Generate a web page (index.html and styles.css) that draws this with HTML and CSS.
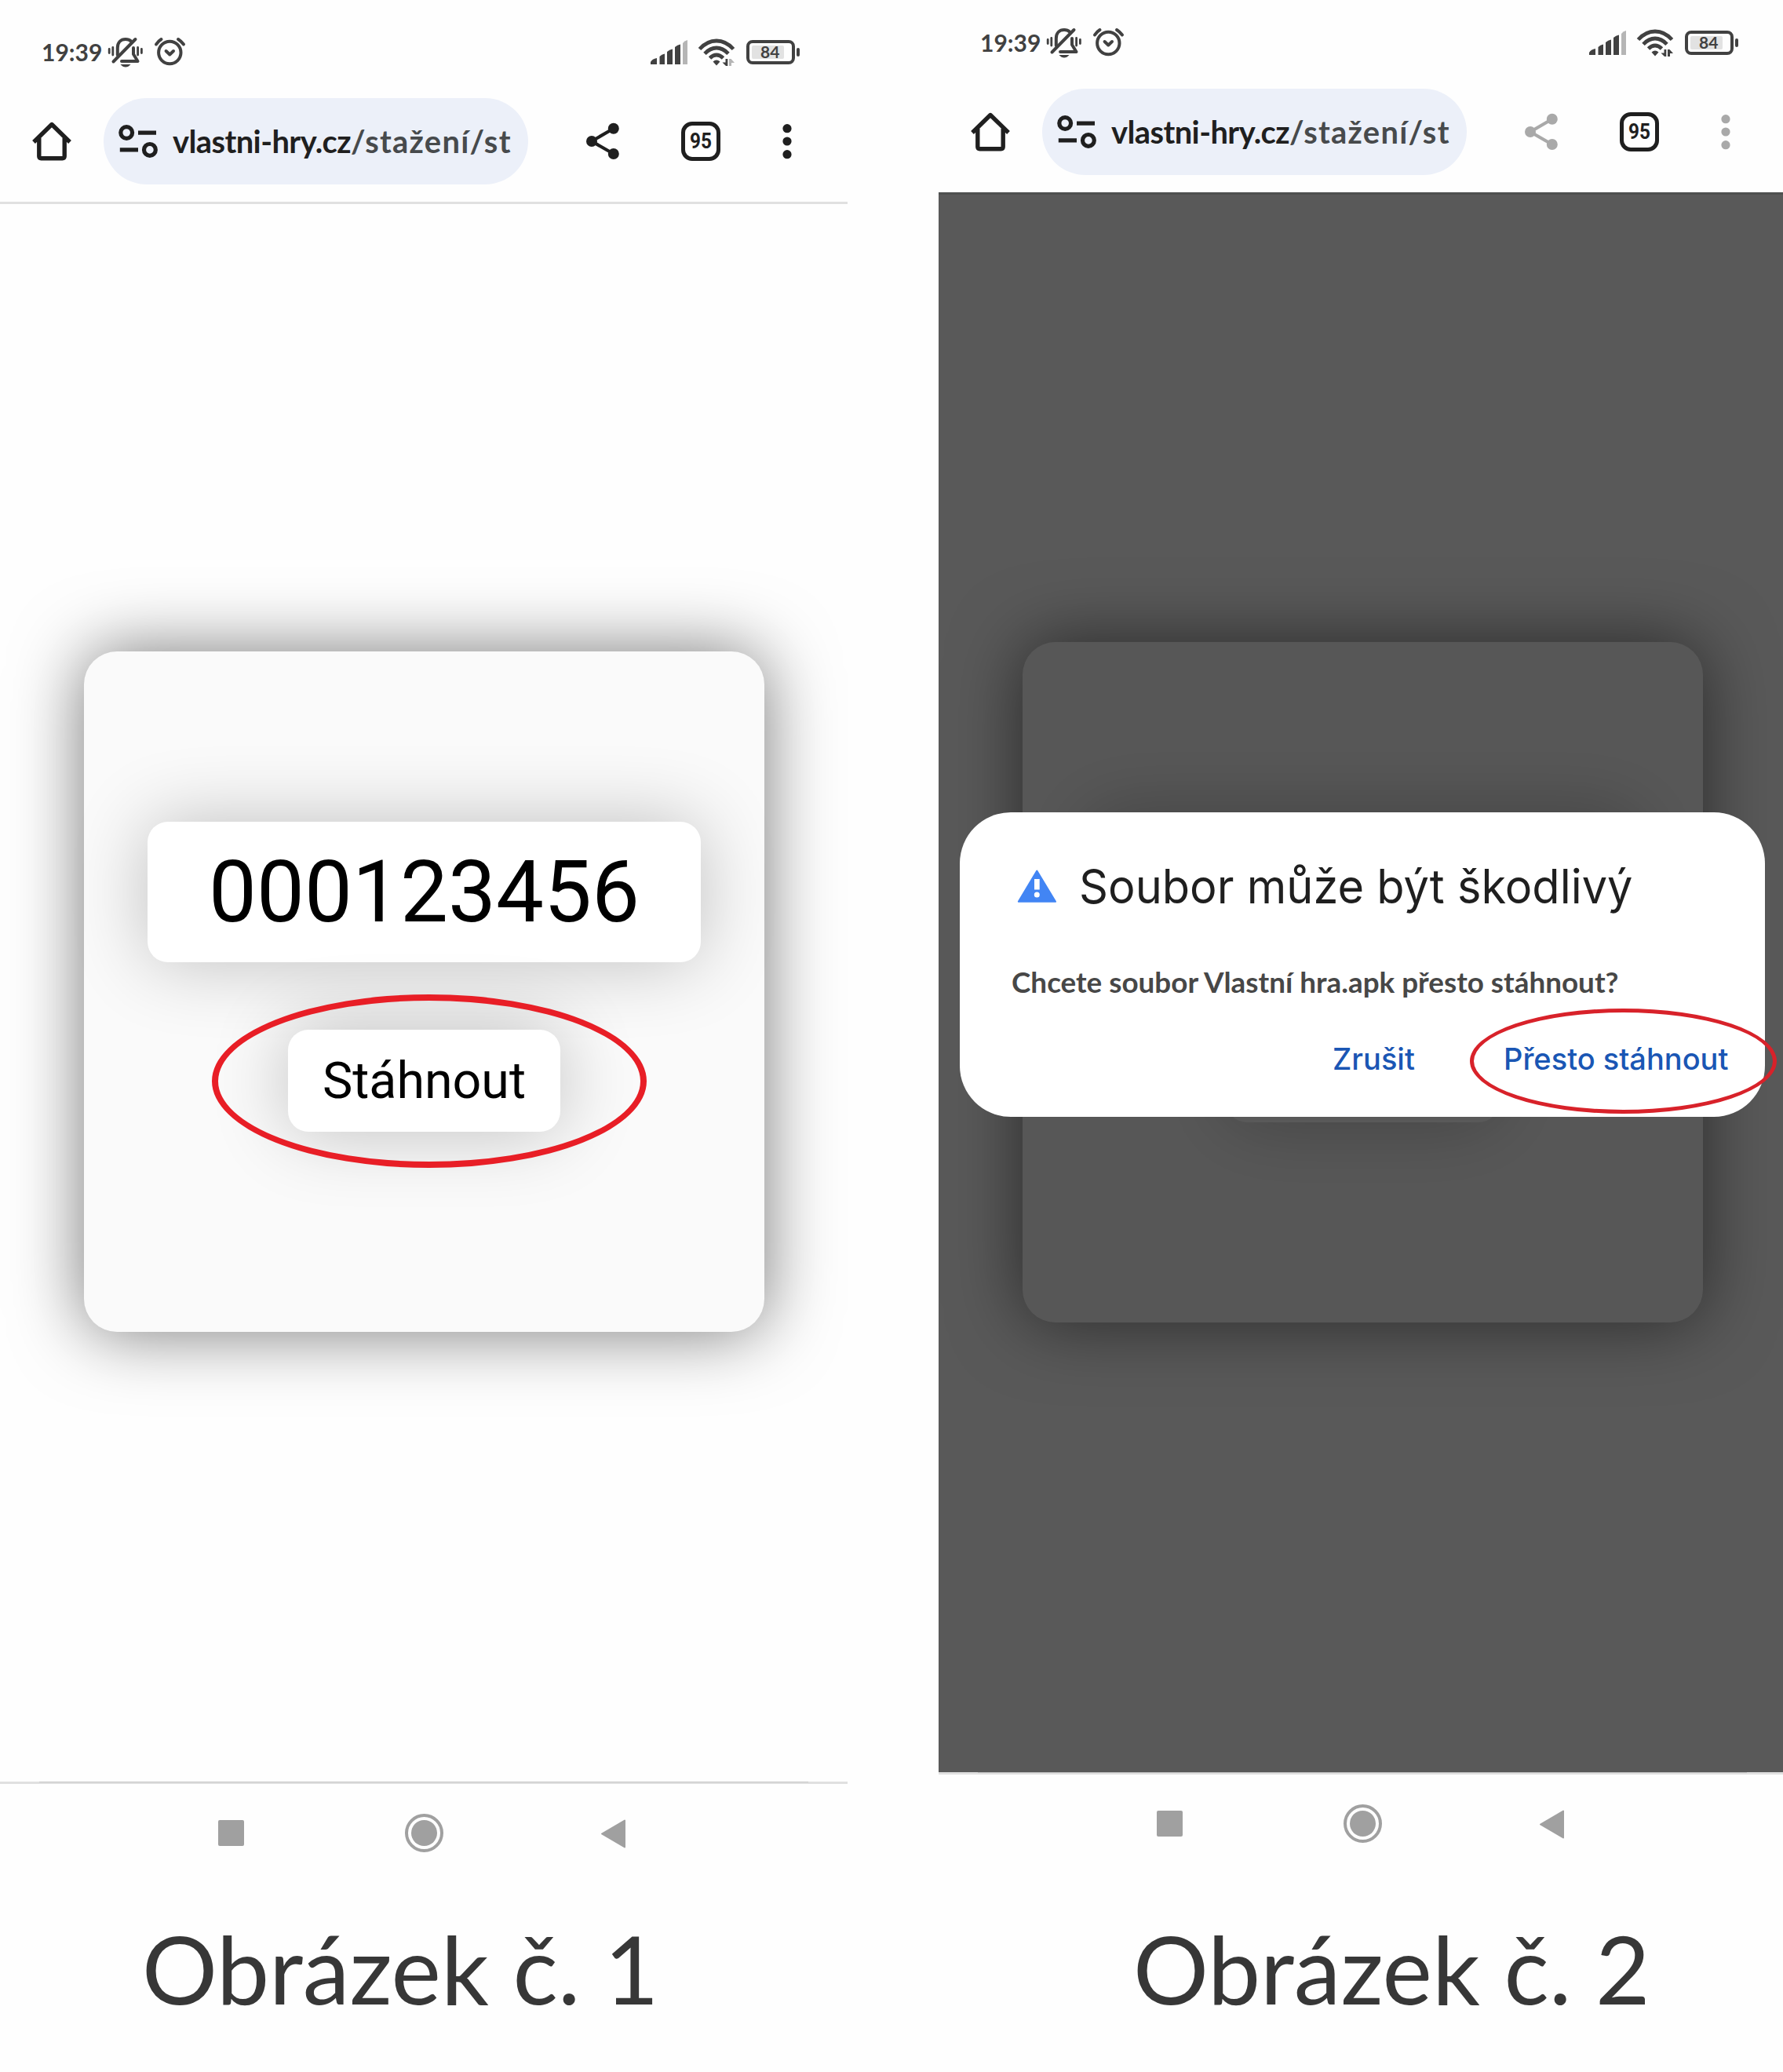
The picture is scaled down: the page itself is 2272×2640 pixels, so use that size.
FILE: index.html
```html
<!DOCTYPE html>
<html lang="cs">
<head>
<meta charset="utf-8">
<title>Stažení aplikace</title>
<link rel="stylesheet" href="styles.css">
</head>
<body>
<svg class="sprite" aria-hidden="true">
  <symbol id="i-mute" viewBox="137 46 47 40">
    <g fill="none" stroke="currentColor" stroke-linecap="round" stroke-linejoin="round">
      <path stroke-width="4" d="M149.8 70V61C149.8 54 154 50 160 50C163 50 165.500 51 167 52.500M170 61V69L175.500 78H155"/>
      <path stroke-width="4" d="M144.500 78.500L172.500 50"/>
      <path stroke-width="2.800" d="M139.200 62.500V67.500M143.800 60.500V70M175.600 60.500V70M180.400 62.500V67.500"/>
    </g>
    <path fill="currentColor" d="M153.500 82H166.500Q163.500 85.500 160 85.500T153.500 82Z"/>
  </symbol>
  <symbol id="i-alarm" viewBox="196 46 42 40">
    <g fill="none" stroke="currentColor" stroke-width="4" stroke-linecap="round" stroke-linejoin="round">
      <circle cx="216.300" cy="67" r="14.200"/>
      <path d="M211.600 65L216.300 69.500L221 65M199 56.500Q201.500 52.500 205.500 50M227 50Q231 52.500 234 56.500"/>
    </g>
  </symbol>
  <symbol id="i-signal" viewBox="828 46 50 40">
    <path fill="currentColor" d="M829 82V79Q831 75 837 74V82ZM840.500 82V72Q843 69 847 68.500V82ZM850 82V66Q853 63 857 62.500V82ZM860 82V60Q863 57 867 56.500V82Z"/>
    <path fill="#b5b5b5" d="M870 82V55Q872 52 876 51V82Z"/>
  </symbol>
  <symbol id="i-wifi" viewBox="888 46 50 40">
    <g fill="none" stroke="currentColor" stroke-width="4.800">
      <path d="M891.500 62.500Q901 52 913 52T934.500 62.500M898 68.300Q905 61 913 61T928 68.300M904.500 74Q908.500 70 913 70T921.500 74"/>
    </g>
    <path fill="currentColor" d="M908.500 78.500Q913 74.500 917.500 78.500L913 83.500ZM924.500 75H927.300V84H925L920.500 79.500H924.500Z"/>
    <path class="up" d="M929 75H931.500L936 80H932V84H929Z"/>
  </symbol>
  <symbol id="i-home" viewBox="41 155 50 50">
    <path fill="none" stroke="currentColor" stroke-width="5.400" stroke-linejoin="round" d="M43 181L66 158.500L89 181M49.800 176V199Q49.800 201.700 52.500 201.700H79.500Q82.200 201.700 82.200 199V176"/>
  </symbol>
  <symbol id="i-tune" viewBox="150 157 52 46">
    <g fill="none" stroke="currentColor" stroke-width="5.200">
      <circle cx="161.200" cy="169" r="7.400"/><circle cx="190.900" cy="190.900" r="7.400"/>
      <path d="M176 169.200H199M152.800 190.900H176"/>
    </g>
  </symbol>
  <symbol id="i-share" viewBox="746 157 44 48">
    <path fill="none" stroke="currentColor" stroke-width="4.200" d="M781.800 164.700L754 181L781.800 197"/>
    <g fill="currentColor"><circle cx="754" cy="181" r="7"/><circle cx="781.800" cy="164.700" r="7"/><circle cx="781.800" cy="197" r="7"/></g>
  </symbol>
  <symbol id="i-more" viewBox="997 157 12 46">
    <g fill="currentColor"><circle cx="1003" cy="163.700" r="5.600"/><circle cx="1003" cy="180" r="5.600"/><circle cx="1003" cy="196.700" r="5.600"/></g>
  </symbol>
  <symbol id="i-back" viewBox="764 2315 34 40">
    <path fill="currentColor" stroke="currentColor" stroke-width="2" stroke-linejoin="round" d="M767 2335.500L796 2318.500V2352.500Z"/>
  </symbol>
  <symbol id="i-warn" viewBox="1297 1108 51 44">
    <path fill="#4285f4" stroke="#4285f4" stroke-width="2" stroke-linejoin="round" d="M1322.300 1110.500L1346 1149.800H1298.800Z"/>
    <path fill="#fff" d="M1319 1121H1325.700V1134.500H1319Z"/><circle fill="#fff" cx="1322.300" cy="1141" r="3.500"/>
  </symbol>
</svg>

<main class="sheet">
  <figure class="step">
    <div class="phone">
      <div class="status">
        <span class="fit time">19:39</span>
        <svg class="s-mute"><use href="#i-mute"/></svg>
        <svg class="s-alarm"><use href="#i-alarm"/></svg>
        <svg class="s-signal"><use href="#i-signal"/></svg>
        <svg class="s-wifi"><use href="#i-wifi"/></svg>
        <span class="battery"><span class="charge"></span><span class="fit level">84</span></span>
      </div>
      <div class="toolbar">
        <svg class="t-home"><use href="#i-home"/></svg>
        <div class="omnibox">
          <svg class="t-tune"><use href="#i-tune"/></svg>
          <span class="fit url">vlastni-hry.cz<span class="path">/stažení/st</span></span>
        </div>
        <svg class="t-share"><use href="#i-share"/></svg>
        <span class="tabs"><span class="fit count">95</span></span>
        <svg class="t-more"><use href="#i-more"/></svg>
      </div>
      <div class="page">
        <div class="card">
          <div class="code"><span class="digits">000123456</span></div>
          <div class="download"><span class="label">Stáhnout</span></div>
        </div>
      </div>
      <div class="nav">
        <span class="n-recent"></span><span class="n-home"></span><svg class="n-back"><use href="#i-back"/></svg>
      </div>
    </div>
    <figcaption class="caption"><span class="fit cap">Obrázek č. 1</span></figcaption>
    <div class="ring ring-download"></div>
  </figure>

  <figure class="step step-two">
    <div class="phone">
      <div class="status">
        <span class="fit time">19:39</span>
        <svg class="s-mute"><use href="#i-mute"/></svg>
        <svg class="s-alarm"><use href="#i-alarm"/></svg>
        <svg class="s-signal"><use href="#i-signal"/></svg>
        <svg class="s-wifi"><use href="#i-wifi"/></svg>
        <span class="battery"><span class="charge"></span><span class="fit level">84</span></span>
      </div>
      <div class="toolbar">
        <svg class="t-home"><use href="#i-home"/></svg>
        <div class="omnibox">
          <svg class="t-tune"><use href="#i-tune"/></svg>
          <span class="fit url">vlastni-hry.cz<span class="path">/stažení/st</span></span>
        </div>
        <svg class="t-share"><use href="#i-share"/></svg>
        <span class="tabs"><span class="fit count">95</span></span>
        <svg class="t-more"><use href="#i-more"/></svg>
      </div>
      <div class="page">
        <div class="card">
          <div class="code"></div>
          <div class="download"></div>
        </div>
        <div class="scrim">
          <div class="dialog">
            <div class="heading"><svg class="d-warn"><use href="#i-warn"/></svg><span class="fit title">Soubor může být škodlivý</span></div>
            <div class="message"><span class="fit msg">Chcete soubor Vlastní hra.apk přesto stáhnout?</span></div>
            <div class="actions"><span class="fit cancel">Zrušit</span><span class="fit confirm">Přesto stáhnout</span></div>
          </div>
        </div>
      </div>
      <div class="nav">
        <span class="n-recent"></span><span class="n-home"></span><svg class="n-back"><use href="#i-back"/></svg>
      </div>
    </div>
    <figcaption class="caption"><span class="fit cap">Obrázek č. 2</span></figcaption>
    <div class="ring ring-confirm"></div>
  </figure>
</main>
</body>
</html>
```
FILE: styles.css
```css
* { box-sizing: border-box; }
body { margin: 0; width: 2272px; height: 2640px; overflow: hidden; background: #fefefe; font-family: "Lato", "Liberation Sans", sans-serif; }
.sprite { display: none; }
svg { display: block; flex: none; }
.sheet { display: flex; gap: 116px; width: 2272px; height: 2640px; overflow: hidden; }
.step { --up: #b5b5b5; position: relative; flex: none; width: 1080px; margin: 0; padding-top: 12px; }
.step-two { --up: #414141; padding-top: 0; width: 1076px; overflow: hidden; }
.phone { width: 1080px; height: 2412px; display: flex; flex-direction: column; }
.fit { display: block; flex: none; white-space: nowrap; transform-origin: 0 50%; }

.status { display: flex; align-items: center; height: 88px; padding: 20px 67px 0 53px; color: #414141; }
.time { width: 84px; font-size: 30px; font-weight: 700; }
.s-mute { width: 47px; height: 40px; }
.s-alarm { width: 42px; height: 40px; margin-left: 12px; }
.s-signal { width: 50px; height: 40px; margin-left: auto; }
.s-wifi { width: 50px; height: 40px; margin-left: 10px; }
.up { fill: var(--up); }
.battery { position: relative; display: flex; align-items: center; width: 62px; height: 31px; margin-left: 13px; padding-left: 14px; border: 4px solid currentColor; border-radius: 8px; }
.battery::after { content: ""; position: absolute; left: 60px; top: 6px; width: 4px; height: 11px; border-radius: 2px; background: currentColor; }
.charge { position: absolute; left: 3px; top: 3px; width: 41px; height: 17px; border-radius: 2px; background: #e2e2e2; }
.level { position: relative; font-size: 21px; line-height: 22px; font-weight: 700; }

.toolbar { display: flex; align-items: center; height: 160px; padding: 3px 71px 0 41px; border-bottom: 3px solid #e0e0e0; color: #1f1f1f; }
.t-home { width: 50px; height: 50px; }
.omnibox { display: flex; align-items: center; width: 541px; height: 110px; margin-left: 41px; padding-left: 18px; border-radius: 55px; background: #ecf0f9; }
.t-tune { width: 52px; height: 46px; }
.url { margin-left: 18px; font-size: 41px; font-weight: 700; line-height: 56px; letter-spacing: -.6px; transform: scaleX(.973); }
.path { color: #474a4c; letter-spacing: 1.300px; }
.t-share { width: 44px; height: 48px; margin-left: 73px; }
.tabs { display: flex; align-items: center; width: 50px; height: 50px; margin-left: 78px; padding-left: 6px; border: 5px solid currentColor; border-radius: 14px; }
.count { font: 700 28px/30px Roboto, sans-serif; transform: scaleX(.87); }
.t-more { width: 12px; height: 46px; margin-left: auto; }

.page { position: relative; height: 2010px; padding: 570px 0 0 107px; overflow: hidden; }
.card { display: flex; flex-direction: column; align-items: center; width: 867px; height: 867px; padding-top: 217px; border-radius: 42px; background: #fafafa; box-shadow: 0 0 90px rgba(0, 0, 0, .53); }
.code { display: flex; align-items: center; justify-content: center; width: 705px; height: 179px; border-radius: 26px; background: #fff; box-shadow: 0 0 96px rgba(0, 0, 0, .24); }
.digits { font: 400 108.500px/130px Roboto, sans-serif; color: #000; }
.download { display: flex; align-items: center; justify-content: center; width: 347px; height: 130px; margin-top: 86px; border-radius: 26px; background: #fff; box-shadow: 0 0 96px rgba(0, 0, 0, .24); }
.label { font: 400 64.500px/76px Roboto, sans-serif; color: #000; }

.nav { position: relative; display: flex; align-items: center; height: 128px; padding: 0 282px 0 278px; border-top: 3px solid #e0e0e0; color: #a0a0a0; }
.nav::before { content: ""; position: absolute; left: 50px; right: 50px; top: -3px; height: 1px; background: #c4c4c4; }
.n-recent { width: 33px; height: 33px; border-radius: 2px; background: currentColor; }
.n-home { display: flex; width: 49px; height: 49px; margin-left: 205px; padding: 4px; border: 4px solid currentColor; border-radius: 50%; background: currentColor content-box; }
.n-back { width: 34px; height: 40px; margin-left: auto; }

.caption { display: block; }
.cap { font-size: 120px; line-height: 144px; color: #373737; }
.step .caption { padding: 11.500px 0 0 181px; }
.step-two .caption { padding: 23.500px 0 0 248px; }

.ring { position: absolute; border-style: solid; border-radius: 50%; }
.ring-download { left: 270px; top: 1267px; width: 554px; height: 221px; border-width: 8px; border-color: #e81e26; }
.ring-confirm { left: 677px; top: 1285px; width: 391px; height: 134px; border-width: 5px; border-color: #d8222a; }

.step-two .toolbar { border-color: #4e504f; }
.step-two .t-share, .step-two .t-more { color: #a9a9a9; }
.scrim { position: absolute; inset: 0; padding: 787px 0 0 27px; background: rgba(0, 0, 0, .65); }
.dialog { width: 1026px; height: 388px; border-radius: 65px; background: #fff; padding: 54px 0 0 66px; }
.heading { display: flex; align-items: center; height: 80px; padding-left: 7px; }
.d-warn { width: 51px; height: 44px; }
.title { margin-left: 28px; font: 400 60px/72px Inter, sans-serif; color: #1f1f1f; transform: scaleX(.962); }
.message { margin-top: 57px; height: 50px; }
.msg { font-size: 36.500px; line-height: 50px; font-weight: 700; color: #474747; transform: scaleX(1.009); }
.actions { display: flex; margin-top: 51px; padding-left: 409px; color: #1a56b4; font: 500 38px/44px Inter, sans-serif; }
.cancel { width: 218px; }
```
